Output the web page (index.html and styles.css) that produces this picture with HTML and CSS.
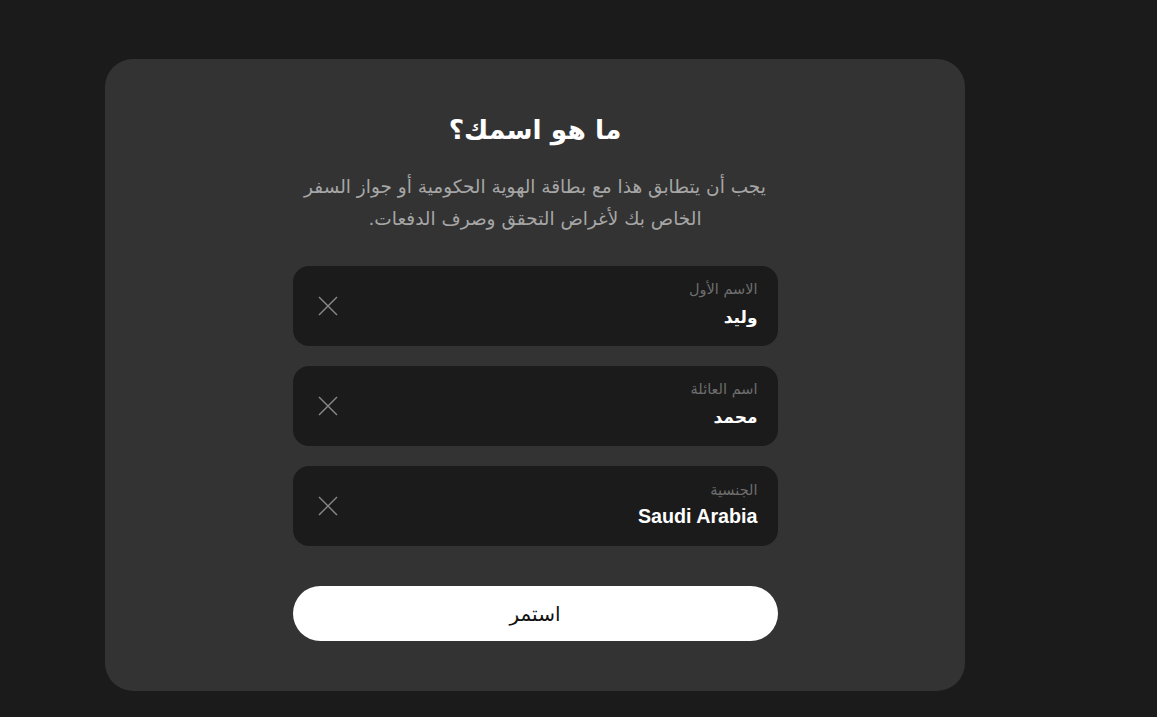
FILE: index.html
```html
<!DOCTYPE html>
<html lang="ar" dir="rtl">
<head>
<meta charset="utf-8">
<link rel="stylesheet" href="styles.css">
</head>
<body>
<main class="card">
  <h1 class="title">ما هو اسمك؟</h1>
  <p class="subtitle">يجب أن يتطابق هذا مع بطاقة الهوية الحكومية أو جواز السفر<br>الخاص بك لأغراض التحقق وصرف الدفعات.</p>
  <div class="fields">
    <div class="field">
      <div class="field-text">
        <span class="label">الاسم الأول</span>
        <span class="value">وليد</span>
      </div>
      <button class="clear" aria-label="مسح"><svg viewBox="0 0 20 20" width="20" height="20"><path d="M1 1L19 19M19 1L1 19" stroke="#8a8a8a" stroke-width="1.4" fill="none"/></svg></button>
    </div>
    <div class="field">
      <div class="field-text">
        <span class="label">اسم العائلة</span>
        <span class="value">محمد</span>
      </div>
      <button class="clear" aria-label="مسح"><svg viewBox="0 0 20 20" width="20" height="20"><path d="M1 1L19 19M19 1L1 19" stroke="#8a8a8a" stroke-width="1.4" fill="none"/></svg></button>
    </div>
    <div class="field">
      <div class="field-text">
        <span class="label">الجنسية</span>
        <span class="value latin">Saudi Arabia</span>
      </div>
      <button class="clear" aria-label="مسح"><svg viewBox="0 0 20 20" width="20" height="20"><path d="M1 1L19 19M19 1L1 19" stroke="#8a8a8a" stroke-width="1.4" fill="none"/></svg></button>
    </div>
  </div>
  <button class="continue">استمر</button>
</main>
</body>
</html>
```
FILE: styles.css
```css
html, body {
  margin: 0;
  padding: 0;
  background: #1b1b1b;
}
body {
  font-family: "DejaVu Sans", "Noto Sans", sans-serif;
  width: 1157px;
  height: 717px;
  overflow: hidden;
  direction: ltr;
}
.card {
  direction: rtl;
  margin: 59px 0 0 105px;
  width: 860px;
  height: 632px;
  box-sizing: border-box;
  background: #333333;
  border-radius: 28px;
  display: flex;
  flex-direction: column;
  align-items: center;
  padding-top: 53px;
}
.title {
  margin: 0;
  font-size: 26.5px;
  font-weight: bold;
  color: #ffffff;
  line-height: 36px;
}
.subtitle {
  margin: 23px 0 0;
  text-align: center;
  color: #a6a6a6;
  font-size: 18.5px;
  line-height: 32px;
}
.fields {
  margin-top: 31px;
  width: 485px;
  display: flex;
  flex-direction: column;
  gap: 20px;
}
.field {
  height: 80px;
  background: #1b1b1b;
  border-radius: 16px;
  display: flex;
  align-items: center;
  justify-content: space-between;
  padding: 0 20px 0 25px;
}
.field-text {
  display: flex;
  flex-direction: column;
  align-items: flex-start;
  margin-top: -2px;
}
.label {
  font-size: 14.5px;
  color: #6e6e6e;
  line-height: 18px;
}
.value {
  font-size: 17px;
  font-weight: bold;
  color: #ffffff;
  line-height: 26px;
  margin-top: 6px;
}
.value.latin {
  font-family: "Liberation Sans", Arial, sans-serif;
  font-size: 19.7px;
  margin-top: 4px;
}
.clear {
  background: none;
  border: 0;
  padding: 0;
  width: 20px;
  height: 20px;
  display: flex;
}
.continue {
  margin-top: 40px;
  width: 485px;
  height: 55px;
  border: 0;
  border-radius: 28px;
  background: #ffffff;
  color: #111111;
  font-family: "DejaVu Sans", sans-serif;
  font-size: 20px;
}
```
